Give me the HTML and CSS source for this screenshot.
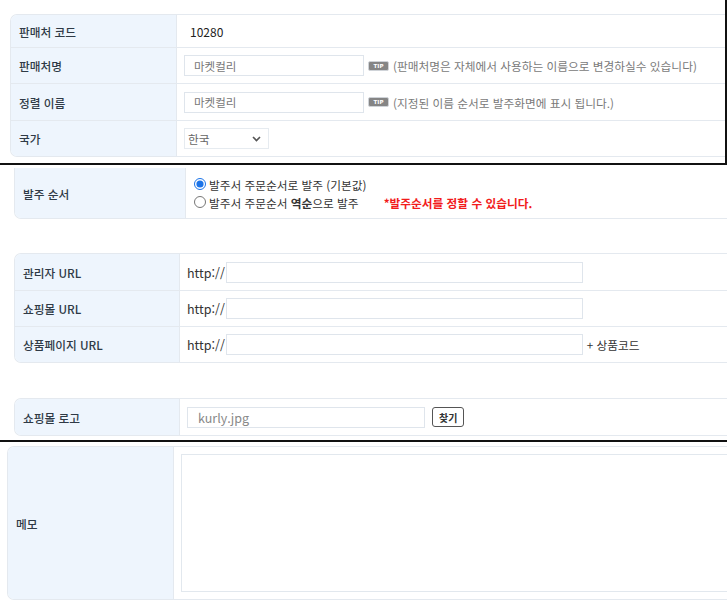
FILE: index.html
```html
<!DOCTYPE html>
<html lang="ko">

<head>
    <meta charset="UTF-8">
    <meta name="viewport" content="width=device-width, initial-scale=1.0">
    <title>판매처 설정</title>

    <link rel="stylesheet" href="styles.css">
</head>

<body>
    <!-- 기본 정보 -->
    <div class="panelTop">
        <div class="tbl tbl-basic">
            <div class="row row-short">
                <div class="th">판매처 코드</div>
                <div class="td"><span class="code">10280</span></div>
            </div>
            <div class="row">
                <div class="th">판매처명</div>
                <div class="td">
                    <input class="txt txt-name" type="text" value="마켓컬리">
                    <span class="tip">TIP</span>
                    <span class="hint">(판매처명은 자체에서 사용하는 이름으로 변경하실수 있습니다)</span>
                </div>
            </div>
            <div class="row row-tall">
                <div class="th">정렬 이름</div>
                <div class="td">
                    <input class="txt txt-name" type="text" value="마켓컬리">
                    <span class="tip">TIP</span>
                    <span class="hint">(지정된 이름 순서로 발주화면에 표시 됩니다.)</span>
                </div>
            </div>
            <div class="row">
                <div class="th">국가</div>
                <div class="td">
                    <div class="select">
                        <span>한국</span>
                        <svg width="9" height="6" viewBox="0 0 9 6"><path d="M1 1l3.5 3.5L8 1" fill="none" stroke="#555" stroke-width="1.6"/></svg>
                    </div>
                </div>
            </div>
        </div>
    </div>

    <!-- 발주 순서 -->
    <div class="tbl tbl-order">
        <div class="row row-order">
            <div class="th">발주 순서</div>
            <div class="td td-radio">
                <label class="radio"><input type="radio" name="order" checked><span>발주서 주문순서로 발주 (기본값)</span></label>
                <div class="radioLine">
                    <label class="radio"><input type="radio" name="order"><span>발주서 주문순서 <b>역순</b>으로 발주</span></label>
                    <span class="warn">*발주순서를 정할 수 있습니다.</span>
                </div>
            </div>
        </div>
    </div>

    <!-- URL -->
    <div class="tbl tbl-url">
        <div class="row">
            <div class="th">관리자 URL</div>
            <div class="td"><span class="http">http://</span><input class="txt txt-url" type="text"></div>
        </div>
        <div class="row">
            <div class="th">쇼핑몰 URL</div>
            <div class="td"><span class="http">http://</span><input class="txt txt-url" type="text"></div>
        </div>
        <div class="row">
            <div class="th">상품페이지 URL</div>
            <div class="td"><span class="http">http://</span><input class="txt txt-url" type="text"><span class="plus">+ 상품코드</span></div>
        </div>
    </div>

    <!-- 로고 -->
    <div class="tbl tbl-logo">
        <div class="row">
            <div class="th">쇼핑몰 로고</div>
            <div class="td">
                <input class="txt txt-file" type="text" value="kurly.jpg">
                <button class="btnFind">찾기</button>
            </div>
        </div>
    </div>

    <div class="divider"></div>

    <!-- 메모 -->
    <div class="tbl tbl-memo">
        <div class="row row-memo">
            <div class="th">메모</div>
            <div class="td td-memo"><textarea class="memo"></textarea></div>
        </div>
    </div>
</body>

</html>
```

FILE: styles.css
```css
* {
    box-sizing: border-box;
}

body {
    margin: 0;
    width: 727px;
    height: 600px;
    overflow: hidden;
    background-color: #fff;
    font-family: "Noto Sans CJK KR", "Noto Sans", sans-serif;
    font-size: 11.7px;
    color: #333;
}

.panelTop {
    padding: 14px 0 6px 10px;
    border-right: 2px solid #111;
    border-bottom: 2px solid #111;
}

/* 표 공통 */
.tbl {
    border: 1px solid #e4e9ef;
    border-right: none;
    border-radius: 7px 0 0 7px;
    overflow: hidden;
}

.row {
    display: flex;
    height: 36px;
    border-top: 1px solid #e4e9ef;
}

.row:first-child {
    border-top: none;
}

.row-short {
    height: 32px;
}

.row-tall {
    height: 37px;
}

.th {
    flex: none;
    width: 166px;
    display: flex;
    align-items: center;
    padding-left: 8px;
    background-color: #eef5fd;
    border-right: 1px solid #e4e9ef;
    font-weight: 500;
    color: #2f3a46;
}

.td {
    flex: 1;
    display: flex;
    align-items: center;
    padding-left: 7px;
    color: #333;
}

.code {
    padding-left: 6px;
    font-size: 12px;
    color: #222;
}

.txt {
    height: 21px;
    border: 1px solid #dfe5ec;
    padding: 0 9px;
    font-family: inherit;
    font-size: 11.5px;
    color: #777;
    outline: none;
}

.txt-name {
    width: 180px;
}

.tip {
    margin-left: 4px;
    width: 21px;
    height: 10px;
    border-radius: 2px;
    background-color: #858585;
    border: 1px solid #cfd3d8;
    color: #fff;
    font-family: "DejaVu Sans", sans-serif;
    font-size: 5.5px;
    font-weight: bold;
    line-height: 8px;
    text-align: center;
}

.hint {
    margin-left: 4px;
    color: #7a7a7a;
}

.select {
    width: 85px;
    height: 21px;
    display: flex;
    align-items: center;
    justify-content: space-between;
    padding: 0 7px 0 3px;
    border: 1px solid #e6ebf0;
    color: #666;
}

/* 발주 순서 */
.tbl-order {
    margin: 3px 0 0 14px;
    border-top: none;
    border-radius: 0 0 0 7px;
}

.tbl-order .th {
    width: 171px;
    padding-left: 8px;
}

.row-order {
    height: 50px;
}

.td-radio {
    flex-direction: column;
    align-items: flex-start;
    justify-content: center;
    padding-left: 7px;
}

.radio {
    display: flex;
    align-items: center;
    height: 18px;
    color: #333;
}

.radio input {
    width: 12px;
    height: 12px;
    margin: 0 3px 0 1px;
    accent-color: #1a73e8;
}

.radio b {
    font-weight: bold;
}

.radioLine {
    display: flex;
    align-items: center;
}

.warn {
    margin-left: 25px;
    color: #f21b1b;
    font-weight: bold;
}

/* URL */
.tbl-url {
    margin: 34px 0 0 14px;
}

.tbl-url .th,
.tbl-logo .th {
    width: 165px;
}

.http {
    font-size: 12.5px;
    color: #333;
    margin-right: 1px;
}

.txt-url {
    width: 357px;
}

.plus {
    margin-left: 4px;
    color: #333;
}

/* 로고 */
.tbl-logo {
    margin: 35px 0 0 14px;
}

.txt-file {
    width: 238px;
    font-size: 12.5px;
    padding: 0 10px;
    color: #888;
}

.btnFind {
    margin-left: 7px;
    height: 20px;
    padding: 0 6px;
    border: 1px solid #555;
    border-radius: 3px;
    background-color: #fff;
    font-family: inherit;
    font-size: 10px;
    font-weight: bold;
    color: #333;
}

.divider {
    margin-top: 4px;
    height: 2px;
    background-color: #111;
}

/* 메모 */
.tbl-memo {
    margin: 4px 0 0 7px;
}

.tbl-memo .th {
    width: 166px;
}

.row-memo {
    height: 152px;
}

.td-memo {
    align-items: flex-start;
    padding: 7px 0 0 7px;
}

.memo {
    width: 560px;
    flex: none;
    height: 138px;
    border: 1px solid #e2e8ee;
    resize: none;
    outline: none;
}
```
